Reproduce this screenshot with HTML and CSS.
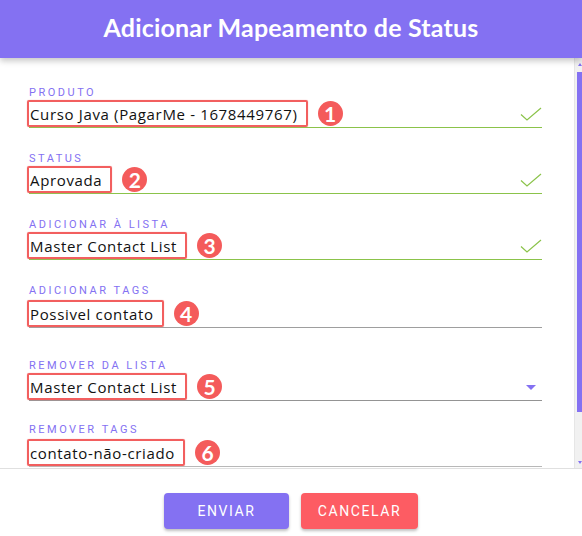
FILE: index.html
```html
<!DOCTYPE html>
<html lang="pt-BR">
<head>
    <meta charset="UTF-8">
    <meta name="viewport" content="width=device-width, initial-scale=1.0">
    <title>Adicionar Mapeamento de Status</title>
    <link rel="stylesheet" href="styles.css">
</head>
<body>
    <div class="dialog">
        <header class="dialog-header">
            <h1>Adicionar Mapeamento de Status</h1>
        </header>

        <div class="dialog-body">
            <form class="mapping-form" onsubmit="event.preventDefault();">
                <div class="field first">
                    <label>Produto</label>
                    <div class="control valid">
                        <span class="mark">Curso Java (PagarMe - 1678449767)</span>
                        <span class="num">1</span>
                        <svg class="check" width="22" height="14" viewBox="0 0 22 14"><path d="M1 7.5 L7 13 L21 1" fill="none" stroke="#8bc34a" stroke-width="1.2"/></svg>
                    </div>
                </div>
                <div class="field">
                    <label>Status</label>
                    <div class="control valid">
                        <span class="mark">Aprovada</span>
                        <span class="num">2</span>
                        <svg class="check" width="22" height="14" viewBox="0 0 22 14"><path d="M1 7.5 L7 13 L21 1" fill="none" stroke="#8bc34a" stroke-width="1.2"/></svg>
                    </div>
                </div>
                <div class="field">
                    <label>Adicionar à lista</label>
                    <div class="control valid">
                        <span class="mark">Master Contact List</span>
                        <span class="num">3</span>
                        <svg class="check" width="22" height="14" viewBox="0 0 22 14"><path d="M1 7.5 L7 13 L21 1" fill="none" stroke="#8bc34a" stroke-width="1.2"/></svg>
                    </div>
                </div>
                <div class="field">
                    <label>Adicionar tags</label>
                    <div class="control tags">
                        <span class="mark">Possivel contato</span>
                        <span class="num">4</span>
                    </div>
                </div>
                <div class="field select">
                    <label>Remover da lista</label>
                    <div class="control dark">
                        <span class="mark">Master Contact List</span>
                        <span class="num">5</span>
                        <svg class="caret" width="10" height="5" viewBox="0 0 10 5"><path d="M0 0 H10 L5 5 Z" fill="#8471f2"/></svg>
                    </div>
                </div>
                <div class="field last">
                    <label>Remover tags</label>
                    <div class="control tags light">
                        <span class="mark">contato-não-criado</span>
                        <span class="num">6</span>
                    </div>
                </div>
            </form>

            <div class="scrollbar">
                <span class="arrow up"></span>
                <div class="track"><div class="thumb"></div></div>
                <span class="arrow down"></span>
            </div>
        </div>

        <footer class="dialog-footer">
            <button type="submit" class="btn btn-send">Enviar</button>
            <button type="button" class="btn btn-cancel">Cancelar</button>
        </footer>
    </div>
</body>
</html>
```

FILE: styles.css
```css
body {
    margin: 0;
    font-family: "Open Sans", Lato, sans-serif;
    background: #fff;
}
.dialog {
    width: 582px;
    height: 536px;
    display: flex;
    flex-direction: column;
    overflow: hidden;
}
.dialog-header {
    height: 58px;
    background-color: #8471f2;
    display: flex;
    align-items: center;
    justify-content: center;
    box-shadow: 0 3px 6px rgba(0, 0, 0, 0.22);
    position: relative;
    z-index: 1;
}
.dialog-header h1 {
    margin: 0 0 4px;
    color: #fff;
    font-family: Lato, sans-serif;
    font-size: 25px;
    font-weight: 700;
    letter-spacing: 0.2px;
}
.dialog-body {
    height: 410px;
    display: flex;
    overflow: hidden;
}
.mapping-form {
    flex: 1;
    padding: 5px 32px 0 29px;
}
.field {
    margin-top: 25px;
}
.field.first {
    margin-top: 24px;
}
.field.select {
    margin-top: 32px;
}
.field.last {
    margin-top: 23px;
}
.field label {
    display: block;
    height: 12px;
    line-height: 12px;
    font-family: Roboto, sans-serif;
    font-size: 11px;
    letter-spacing: 2.5px;
    text-transform: uppercase;
    color: #8471f2;
}
.control {
    height: 28px;
    display: flex;
    align-items: flex-end;
    border-bottom: 1px solid #9e9e9e;
}
.control.tags {
    height: 30px;
}
.control.valid {
    border-bottom: 1px solid #8bc34a;
}
.control.dark {
    border-bottom-color: #949494;
}
.control.light {
    border-bottom-color: #b8b8b8;
}
.mark {
    height: 23px;
    display: flex;
    align-items: center;
    padding: 0 8px 0 1px;
    margin-left: -2px;
    border: 2px solid #f25f5f;
    border-radius: 2px;
    box-shadow: 0 0 1px #f58a8a;
    font-size: 15px;
    letter-spacing: 0.65px;
    color: #111;
    white-space: nowrap;
}
.num {
    width: 25px;
    height: 25px;
    margin: 0 0 1px 10px;
    border-radius: 50%;
    background-color: #f45b5b;
    color: #fff;
    font-family: Lato, sans-serif;
    font-weight: 700;
    font-size: 21px;
    display: flex;
    align-items: center;
    justify-content: center;
}
.check {
    margin: 0 0 6px auto;
}
.caret {
    margin: 0 6px 10px auto;
}
.scrollbar {
    width: 7px;
    background-color: #f1f1f1;
    border-left: 1px solid #e6e6e6;
    display: flex;
    flex-direction: column;
    align-items: flex-end;
}
.arrow {
    width: 0;
    height: 0;
    margin: 5px 0 4px;
    border-left: 2px solid transparent;
    border-right: 2px solid transparent;
}
.arrow.up {
    border-bottom: 3px solid #8471f2;
}
.arrow.down {
    border-top: 3px solid #8471f2;
}
.track {
    flex: 1;
    width: 5px;
    padding-top: 2px;
}
.thumb {
    height: 340px;
    background-color: #8471f2;
}
.dialog-footer {
    flex: 1;
    border-top: 1px solid #e0e0e0;
    display: flex;
    justify-content: center;
    align-items: flex-start;
    gap: 12px;
    padding-top: 24px;
}
.btn {
    height: 36px;
    border: none;
    border-radius: 4px;
    color: #fff;
    font-family: Roboto, sans-serif;
    font-size: 14px;
    letter-spacing: 1.6px;
    text-transform: uppercase;
    box-shadow: 0 2px 3px rgba(0, 0, 0, 0.25);
    cursor: pointer;
}
.btn-send {
    width: 125px;
    background-color: #8471f2;
}
.btn-cancel {
    width: 117px;
    background-color: #fd5c63;
}
```
